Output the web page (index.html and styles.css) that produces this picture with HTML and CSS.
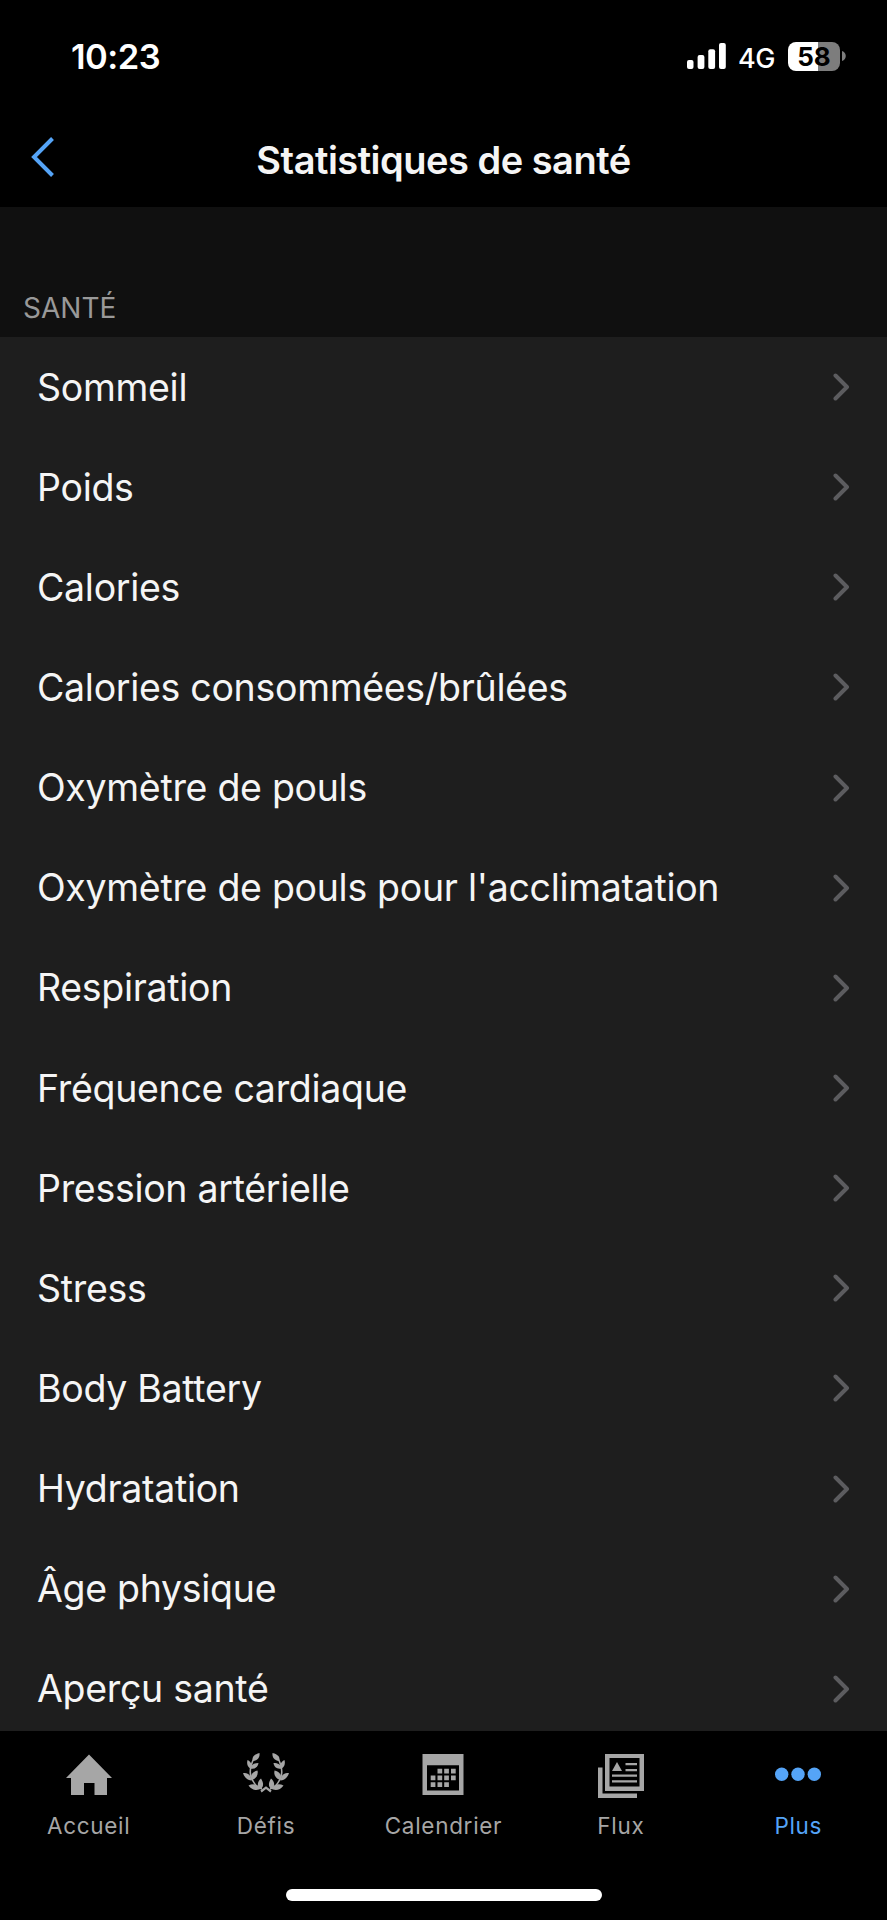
FILE: index.html
```html
<!DOCTYPE html>
<html lang="fr">
<head>
  <meta charset="UTF-8">
  <meta name="viewport" content="width=device-width, initial-scale=1.0">
  <title>Statistiques de santé</title>
  <link rel="stylesheet" href="styles.css">
</head>
<body>
  <div class="screen">
    <div class="status-bar">
      <span class="time">10:23</span>
      <div class="status-right">
        <svg class="signal" width="39" height="26" viewBox="0 0 39 26" fill="#fff">
          <rect x="0" y="17" width="6.5" height="9" rx="2"/>
          <rect x="10.6" y="12" width="6.8" height="14" rx="2"/>
          <rect x="21.3" y="6.3" width="6.8" height="19.7" rx="2"/>
          <rect x="32" y="0" width="6.8" height="26" rx="2"/>
        </svg>
        <span class="network">4G</span>
        <div class="battery"><span>58</span></div>
        <svg class="battery-tip" width="4" height="10" viewBox="0 0 4 10"><path d="M0 0C5 1.500 5 8.500 0 10Z" fill="#7d7d7d"/></svg>
      </div>
    </div>

    <header class="nav">
      <a href="#" class="back" aria-label="Retour">
        <svg width="24" height="40" viewBox="0 0 24 40" fill="none" stroke="#55a4f7" stroke-width="4"><path d="M21.500 1.500L3 20L21.500 38.500"/></svg>
      </a>
      <h1>Statistiques de santé</h1>
    </header>

    <main>
      <h2>SANTÉ</h2>
      <ul class="list" id="list"></ul>
    </main>

    <nav class="tabs">
      <a href="#" class="tab">
        <svg width="46" height="46" viewBox="0 0 46 46" fill="#a6a6a6"><path d="M23 1.500L46 25H41V42H28.500V30H18V42H5V25H0Z"/></svg>
        <span>Accueil</span>
      </a>
      <a href="#" class="tab">
        <svg width="46" height="46" viewBox="0 0 46 46" fill="#a6a6a6">
          <defs>
            <g id="branch">
              <path d="M16.500 0C17 4 15 7.500 10 8C8.500 4 11 1.500 16.500 0Z"/>
              <path d="M4.500 7C8.500 9 9.500 12 8 16C4.500 14 3.500 11 4.500 7Z"/>
              <path d="M15.500 10C15 14 12 16.500 7.500 15.500C8 11.500 11 10 15.500 10Z"/>
              <path d="M0 20C5 20 8 22 8.500 27.500C4 27 1 24 0 20Z"/>
              <path d="M14.500 17.500C15.500 22 13 26 8.500 27C6.500 22.500 9.500 18.500 14.500 17.500Z"/>
              <path d="M5.500 32.500C10 30 14 31 18.500 35.500C14 38 9 37.500 5.500 32.500Z"/>
              <path d="M18 25.500C20.500 29.500 21 33 18 36C13.500 33.500 14 29 18 25.500Z"/>
              <path d="M11 5Q4 20 10 28Q13 34 19 36" fill="none" stroke="#a6a6a6" stroke-width="1.600"/>
            </g>
          </defs>
          <use href="#branch"/>
          <use href="#branch" transform="matrix(-1 0 0 1 46 0)"/>
          <path d="M18 38.500L23 34.700L28 38.500" fill="none" stroke="#a6a6a6" stroke-width="2.200"/>
        </svg>
        <span>Défis</span>
      </a>
      <a href="#" class="tab">
        <svg width="46" height="46" viewBox="0 0 46 46" fill="#a6a6a6">
          <path fill-rule="evenodd" d="M2.500 1H43.500V42H2.500ZM7 12.300V37.500H39V12.300Z"/>
          <path d="M17.500 15.700h4.700v4.700h-4.700zM24.200 15.700h4.700v4.700h-4.700zM31 15.700h4.700v4.700h-4.700zM10.700 22.500h4.700v4.700h-4.700zM17.500 22.500h4.700v4.700h-4.700zM24.200 22.500h4.700v4.700h-4.700zM31 22.500h4.700v4.700h-4.700zM10.700 29.200h4.700v4.700h-4.700zM17.500 29.200h4.700v4.700h-4.700zM24.200 29.200h4.700v4.700h-4.700z"/>
        </svg>
        <span>Calendrier</span>
      </a>
      <a href="#" class="tab">
        <svg width="46" height="46" viewBox="0 0 46 46" fill="#a6a6a6">
          <path fill-rule="evenodd" d="M7 1H46V38H7ZM11.500 5V33.500H41.500V5Z"/>
          <path d="M0 14.500H4.500V40.500H39V45H0Z"/>
          <path d="M19 9L24 18H14ZM27.500 10H39V12.200H27.500ZM27.500 16H39V18.200H27.500ZM14 21.500H39V23.700H14ZM14 27.200H39V29.400H14Z"/>
        </svg>
        <span>Flux</span>
      </a>
      <a href="#" class="tab active">
        <svg width="46" height="46" viewBox="0 0 46 46" fill="#55a4f7"><circle cx="6.700" cy="21.200" r="6.700"/><circle cx="23" cy="21.200" r="6.700"/><circle cx="39.300" cy="21.200" r="6.700"/></svg>
        <span>Plus</span>
      </a>
    </nav>
    <div class="home-indicator"></div>
  </div>

  <script>
    const items = [
      "Sommeil", "Poids", "Calories", "Calories consommées/brûlées",
      "Oxymètre de pouls", "Oxymètre de pouls pour l'acclimatation",
      "Respiration", "Fréquence cardiaque", "Pression artérielle", "Stress",
      "Body Battery", "Hydratation", "Âge physique", "Aperçu santé"
    ];
    const chevron = '<svg width="17" height="28" viewBox="0 0 17 28" fill="none" stroke="#5c5c5f" stroke-width="4" stroke-linecap="round" stroke-linejoin="round"><path d="M2.500 2.500L14 14L2.500 25.500"/></svg>';

    document.getElementById("list").innerHTML = items
      .map(item => `<li><span>${item}</span>${chevron}</li>`)
      .join("");
  </script>
</body>
</html>
```
FILE: styles.css
```css
* {
  box-sizing: border-box;
}
body {
  font-family: Inter, 'Liberation Sans', sans-serif;
  background: #000;
  color: #f5f5f5;
  margin: 0;
}
.screen {
  display: flex;
  flex-direction: column;
  height: 1920px;
  overflow: hidden;
}
.status-bar {
  display: flex;
  justify-content: space-between;
  align-items: center;
  height: 112px;
  padding: 0 41px 0 71px;
  color: #fff;
}
.time {
  font-size: 34.5px;
  font-weight: 600;
  letter-spacing: -0.5px;
}
.status-right {
  display: flex;
  align-items: center;
}
.network {
  width: 38px;
  margin: 4px 12px 0 12px;
  font-size: 27px;
  font-weight: 500;
  letter-spacing: -0.5px;
}
.battery {
  width: 52px;
  height: 29px;
  border-radius: 8px;
  background: linear-gradient(to right, #fff 58%, #7d7d7d 58%);
  color: #000;
  font-size: 26px;
  font-weight: 700;
  line-height: 29px;
  text-align: center;
}
.battery-tip {
  margin-left: 2px;
}
.nav {
  display: grid;
  grid-template-columns: 120px 1fr 120px;
  align-items: center;
  height: 95px;
}
.back {
  display: flex;
  padding: 0 0 6px 31px;
}
h1 {
  margin: 0;
  font-size: 38px;
  font-weight: 600;
  letter-spacing: -0.5px;
  text-align: center;
  white-space: nowrap;
}
main {
  flex: 1;
  min-height: 0;
  overflow: hidden;
  background: #1e1e1e;
}
h2 {
  height: 130px;
  margin: 0;
  padding: 83px 0 0 23px;
  background: #101010;
  color: #999;
  font-size: 28px;
  font-weight: 400;
  line-height: 36px;
}
.list {
  margin: 0;
  padding: 0;
  list-style: none;
}
.list li {
  display: flex;
  justify-content: space-between;
  align-items: center;
  height: 100.15px;
  padding: 0 37px;
  font-size: 37.5px;
  letter-spacing: -0.3px;
}
.tabs {
  display: grid;
  grid-template-columns: repeat(5, 1fr);
  height: 158px;
  padding-top: 22px;
}
.tab {
  display: flex;
  flex-direction: column;
  align-items: center;
  color: #a6a6a6;
  font-size: 22.5px;
  line-height: 28px;
  letter-spacing: 0.7px;
  text-decoration: none;
}
.tab svg {
  margin-bottom: 13px;
}
.tab.active {
  color: #55a4f7;
}
.home-indicator {
  width: 316px;
  height: 12px;
  margin: 0 auto 19px;
  border-radius: 6px;
  background: #fff;
}
```
